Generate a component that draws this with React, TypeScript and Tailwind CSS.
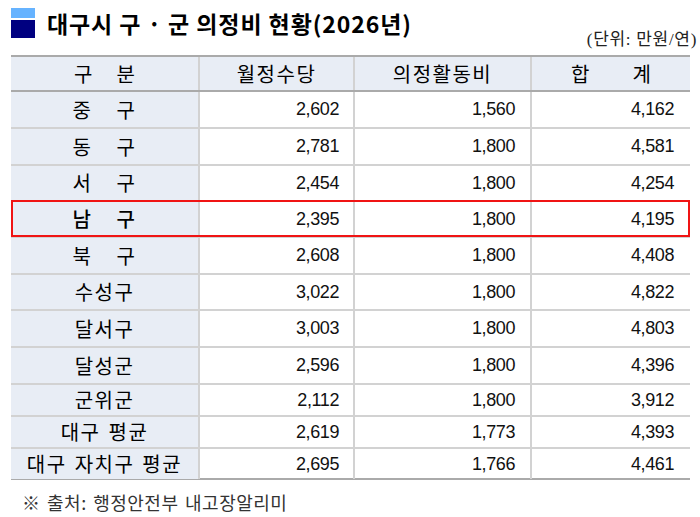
const KR = '"Noto Sans CJK KR", "Noto Sans", sans-serif'
const NUM = '"Liberation Sans", Arial, sans-serif'

type Row = {
  label: string[]
  pay: string
  act: string
  total: string
  h: string
  highlight?: boolean
}

const rows: Row[] = [
  { label: ['중', '구'], pay: '2,602', act: '1,560', total: '4,162', h: 'h-[37px]' },
  { label: ['동', '구'], pay: '2,781', act: '1,800', total: '4,581', h: 'h-[37px]' },
  { label: ['서', '구'], pay: '2,454', act: '1,800', total: '4,254', h: 'h-[36px]' },
  { label: ['남', '구'], pay: '2,395', act: '1,800', total: '4,195', h: 'h-[36px]', highlight: true },
  { label: ['북', '구'], pay: '2,608', act: '1,800', total: '4,408', h: 'h-[37px]' },
  { label: ['수성구'], pay: '3,022', act: '1,800', total: '4,822', h: 'h-[36px]' },
  { label: ['달서구'], pay: '3,003', act: '1,800', total: '4,803', h: 'h-[37px]' },
  { label: ['달성군'], pay: '2,596', act: '1,800', total: '4,396', h: 'h-[37px]' },
  { label: ['군위군'], pay: '2,112', act: '1,800', total: '3,912', h: 'h-[32px]' },
  { label: ['대구 평균'], pay: '2,619', act: '1,773', total: '4,393', h: 'h-[32px]' },
  { label: ['대구 자치구 평균'], pay: '2,695', act: '1,766', total: '4,461', h: 'h-[31px]' },
]

const grid = 'grid grid-cols-[187px_155px_177px_160px]'

function NumCell({ value, pr }: { value: string; pr: string }) {
  return (
    <div
      className={`flex items-center justify-end border-l-2 border-[#d2d2d2] text-[18px] tracking-[-0.4px] text-[#111] ${pr}`}
      style={{ fontFamily: NUM }}
    >
      {value}
    </div>
  )
}

export default function App() {
  return (
    <div className="h-[517px] w-[700px] bg-white text-black" style={{ fontFamily: KR }}>
      {/* title + unit */}
      <div className="flex items-start justify-between pt-[7px] pl-[11px] pr-[3px]">
        <div className="flex items-center gap-[12px]">
          <div className="flex w-[24px] flex-col gap-[2px]">
            <div className="h-[10px] bg-[#66b3ff]" />
            <div className="h-[18px] bg-[#000080]" />
          </div>
          <h1 className="text-[23px] leading-[32px] font-bold tracking-[0.9px]">
            대구시 구 · 군 의정비 현황(2026년)
          </h1>
        </div>
        <span
          className="mt-[23px] text-[17px] leading-[20px] tracking-[0.7px] text-[#222]"
          style={{ fontFamily: '"Liberation Serif", "Noto Sans CJK KR", serif' }}
        >
          (단위: 만원/연)
        </span>
      </div>

      {/* table */}
      <div className="mt-[5px] ml-[11px] w-[679px]">
        <div
          className={`${grid} h-[37px] border-t-2 border-b-2 border-[#aaaaaa] bg-[#e8edf5] text-[20px]`}
        >
          <div className="flex items-center justify-center gap-[24px]">
            <span>구</span>
            <span>분</span>
          </div>
          <div className="flex items-center justify-center border-l-2 border-[#d2d2d2] tracking-[1.5px]">
            월정수당
          </div>
          <div className="flex items-center justify-center border-l-2 border-[#d2d2d2] tracking-[1.5px]">
            의정활동비
          </div>
          <div className="flex items-center justify-center gap-[43px] border-l-2 border-[#d2d2d2]">
            <span>합</span>
            <span>계</span>
          </div>
        </div>

        {rows.map((r, i) => (
          <div
            key={r.label.join('')}
            className={`${grid} relative ${r.h} border-b-2 ${
              i === rows.length - 1 ? 'border-[#aaaaaa]' : 'border-[#d2d2d2]'
            }`}
          >
            <div
              className={`flex items-center justify-center gap-[24px] bg-[#e8edf5] text-[20px] ${
                r.highlight ? 'font-medium' : ''
              }`}
            >
              {r.label.map((t) => (
                <span key={t} className="whitespace-pre tracking-[1.5px] [word-spacing:2px]">
                  {t}
                </span>
              ))}
            </div>
            <NumCell value={r.pay} pr="pr-[14px]" />
            <NumCell value={r.act} pr="pr-[15px]" />
            <NumCell value={r.total} pr="pr-[16px]" />
            {r.highlight && (
              <div className="pointer-events-none absolute -top-[2px] -bottom-[1px] left-0 right-0 border-2 border-[#f01414]" />
            )}
          </div>
        ))}
      </div>

      <p className="mt-[9px] ml-[22px] text-[18px] leading-[26px] tracking-[0.5px] text-[#333] [word-spacing:2px]">
        ※ 출처: 행정안전부 내고장알리미
      </p>
    </div>
  )
}
